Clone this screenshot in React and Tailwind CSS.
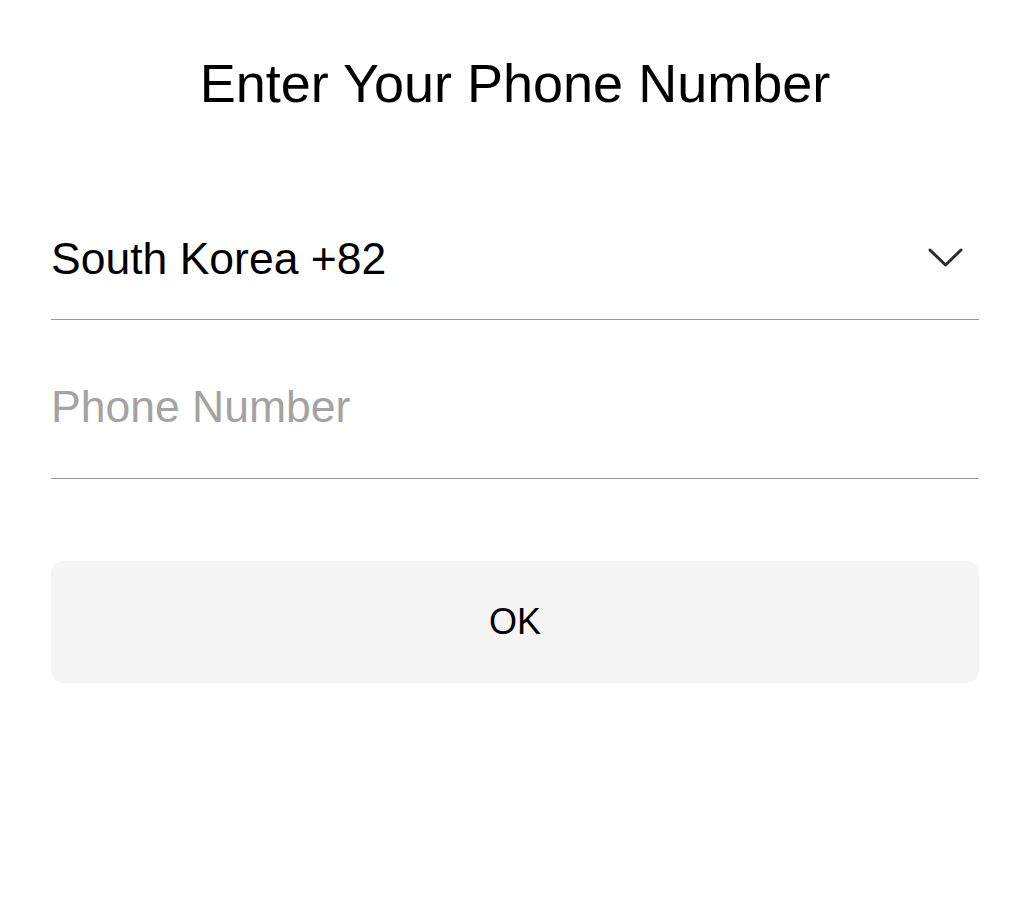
import { useState } from "react"

function Chevron() {
  return (
    <svg width="35" height="19" viewBox="0 0 35 19" fill="none" className="text-[#2c2c2e]">
      <polyline
        points="2,2 17.5,17 33,2"
        stroke="currentColor"
        strokeWidth="3"
        strokeLinecap="round"
        strokeLinejoin="round"
      />
    </svg>
  )
}

export default function App() {
  const [phone, setPhone] = useState("")

  return (
    <div className="min-h-[908px] w-full bg-white font-['Liberation_Sans',Arial,sans-serif] text-black">
      <div className="ml-[51px] flex w-[928px] flex-col pt-[56px]">
        <h1 className="text-center text-[54px] leading-none font-normal">
          Enter Your Phone Number
        </h1>

        {/* Country selector */}
        <button className="mt-[127px] flex items-center justify-between border-b border-[#9a9a9a] pb-[37px] text-left">
          <span className="text-[44.5px] leading-none">South Korea +82</span>
          <span className="mr-[16px] -mt-[4px]">
            <Chevron />
          </span>
        </button>

        {/* Phone input */}
        <div className="mt-[65px] border-b border-[#9a9a9a] pb-[49px]">
          <input
            value={phone}
            onChange={(e) => setPhone(e.target.value)}
            placeholder="Phone Number"
            className="block h-[44px] w-full bg-transparent p-0 text-[44.5px] leading-none outline-none placeholder:text-[#a3a3a3]"
          />
        </div>

        <button className="mt-[82px] flex h-[122px] items-center justify-center rounded-[12px] bg-[#f5f5f5] text-[36px] leading-none">
          OK
        </button>
      </div>
    </div>
  )
}
